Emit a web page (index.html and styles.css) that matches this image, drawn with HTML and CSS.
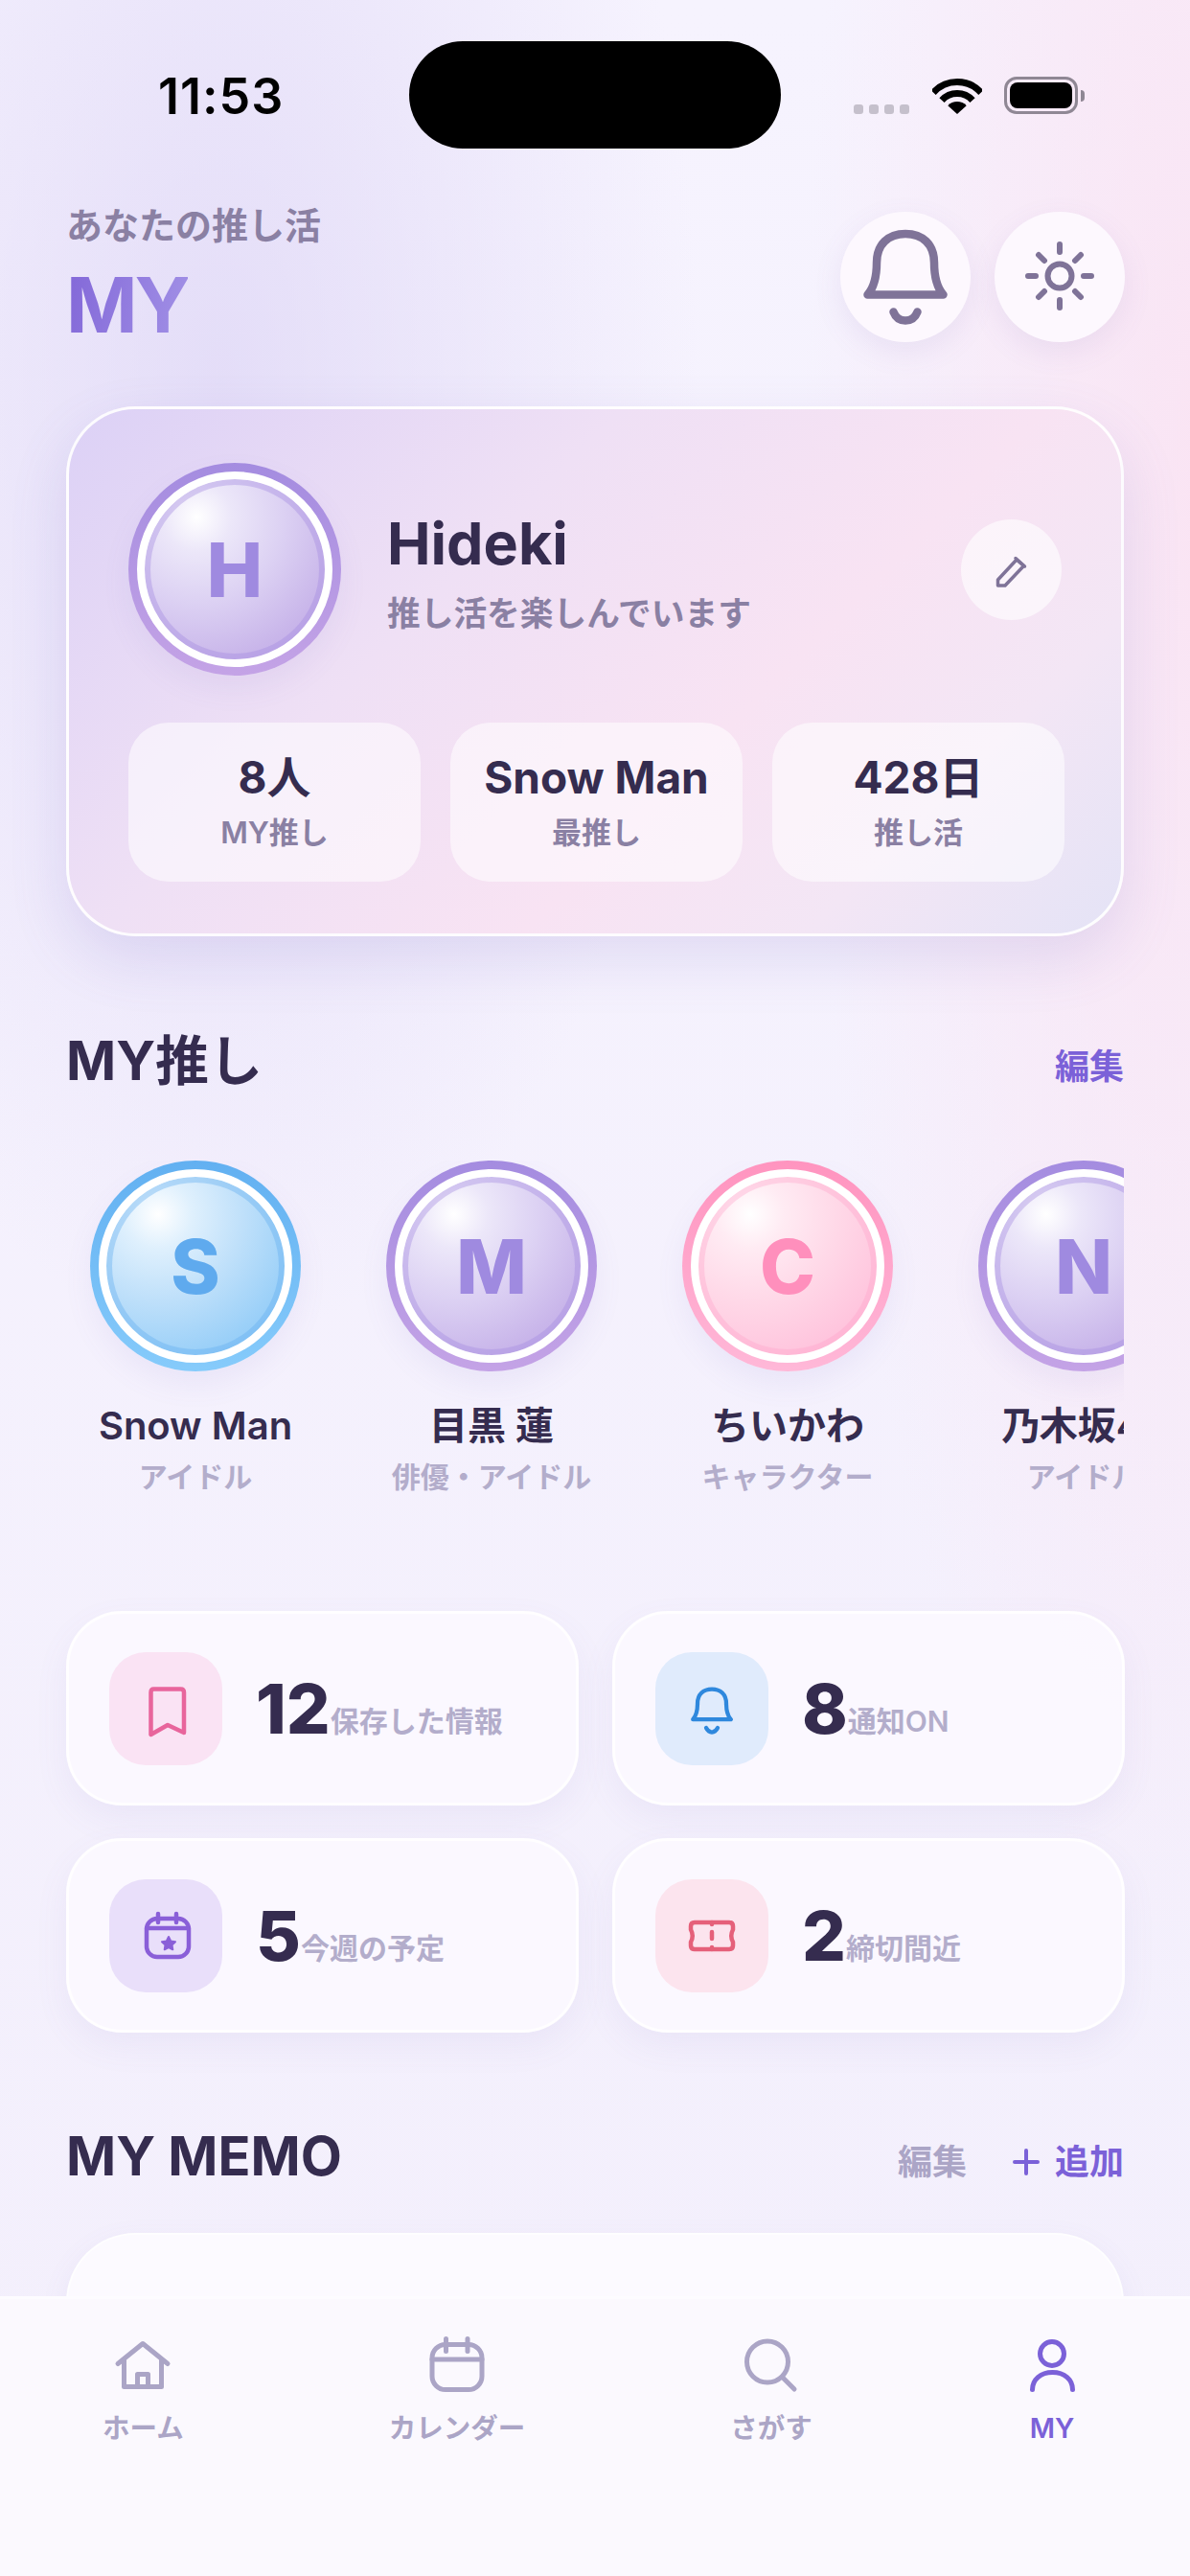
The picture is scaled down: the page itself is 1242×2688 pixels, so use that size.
FILE: index.html
```html
<!DOCTYPE html>
<html lang="ja">
<head>
    <meta charset="UTF-8">
    <meta name="viewport" content="width=device-width, initial-scale=1.0">
    <title>MY</title>
    <link rel="stylesheet" href="styles.css">
</head>
<body>
<div class="page">
    <div class="status">
        <div class="time">11:53</div>
        <div class="island"></div>
        <div class="status-icons">
            <div class="signal"><i></i><i></i><i></i><i></i></div>
            <svg class="wifi" width="52" height="38" viewBox="0 0 52 38" fill="none" stroke="#000">
                <path d="M1.1 15.6A33.5 33.5 0 0 1 50.9 15.6" stroke-width="7"/>
                <path d="M10 23.6A21.5 21.5 0 0 1 42 23.6" stroke-width="7"/>
                <path d="M26 38L16.3 29.3A13 13 0 0 1 35.7 29.3Z" fill="#000" stroke="none"/>
            </svg>
            <div class="battery"><div class="battery-fill"></div></div>
            <div class="battery-cap"></div>
        </div>
    </div>

    <header class="header">
        <div>
            <div class="header-sub">あなたの推し活</div>
            <div class="header-title">MY</div>
        </div>
        <div class="header-btns">
            <div class="round-btn">
                <svg width="136" height="136" viewBox="0 0 136 136" fill="none" stroke="#7f7398" stroke-width="8.5" stroke-linecap="round" stroke-linejoin="round">
                    <path d="M28.5 86.5C36 78 38 66 38 53C38 34 50 23 68 23C86 23 98 34 98 53C98 66 100 78 107.5 86.5Z"/>
                    <path d="M55.5 104.5C58 111 63 113.5 68 113.5C73 113.5 78 111 80.5 104.5"/>
                </svg>
            </div>
            <div class="round-btn">
                <svg width="136" height="136" viewBox="0 0 136 136" fill="none" stroke="#7f7398" stroke-width="6" stroke-linecap="round">
                    <circle cx="68" cy="67" r="12.500"/>
                    <path d="M68 34V42M68 92V100M35 67H43M93 67H101M46 45L52 51M84 83L90 89M46 89L52 83M84 51L90 45"/>
                </svg>
            </div>
        </div>
    </header>

    <section class="profile">
        <div class="profile-top">
            <div class="avatar purple big"><div class="ball">H</div></div>
            <div class="profile-info">
                <div class="profile-name">Hideki</div>
                <div class="profile-text">推し活を楽しんでいます</div>
            </div>
            <div class="edit-btn">
                <svg width="105" height="105" viewBox="0 0 105 105" fill="none" stroke="#7f7398" stroke-width="3.500" stroke-linejoin="round">
                    <path d="M38.500 69V63L58 42L65.500 48.500L46 69Z"/>
                    <path d="M57 40.500L66.500 49" stroke-linecap="round"/>
                </svg>
            </div>
        </div>
        <div class="profile-stats">
            <div class="pstat"><div class="pstat-value">8人</div><div class="pstat-label">MY推し</div></div>
            <div class="pstat"><div class="pstat-value">Snow Man</div><div class="pstat-label">最推し</div></div>
            <div class="pstat"><div class="pstat-value">428日</div><div class="pstat-label">推し活</div></div>
        </div>
    </section>

    <div class="section-head oshi-head">
        <h2>MY推し</h2>
        <div class="section-link">編集</div>
    </div>

    <div class="oshi-row">
        <div class="oshi">
            <div class="avatar blue"><div class="ball">S</div></div>
            <div class="oshi-name">Snow Man</div>
            <div class="oshi-type">アイドル</div>
        </div>
        <div class="oshi">
            <div class="avatar purple"><div class="ball">M</div></div>
            <div class="oshi-name">目黒 蓮</div>
            <div class="oshi-type">俳優・アイドル</div>
        </div>
        <div class="oshi">
            <div class="avatar pink"><div class="ball">C</div></div>
            <div class="oshi-name">ちいかわ</div>
            <div class="oshi-type">キャラクター</div>
        </div>
        <div class="oshi">
            <div class="avatar purple"><div class="ball">N</div></div>
            <div class="oshi-name">乃木坂46</div>
            <div class="oshi-type">アイドル</div>
        </div>
    </div>

    <div class="stat-grid">
        <div class="stat-card">
            <div class="stat-icon bg-pink">
                <svg width="118" height="118" viewBox="0 0 118 118" fill="none" stroke="#e8659c" stroke-width="4.500" stroke-linecap="round" stroke-linejoin="round">
                    <path d="M46.500 38.500H74.500Q78 38.500 78 42V84L61 76L43.500 86V42Q43.500 38.500 46.500 38.500Z"/>
                </svg>
            </div>
            <div class="stat-num">12</div>
            <div class="stat-label">保存した情報</div>
        </div>
        <div class="stat-card">
            <div class="stat-icon bg-blue">
                <svg width="118" height="118" viewBox="0 0 118 118" fill="none" stroke="#2f88dd" stroke-width="4.250" stroke-linecap="round" stroke-linejoin="round">
                    <path d="M39.200 70.200C43 66 44 60 44 53.500C44 44 50 38.500 59 38.500C68 38.500 74 44 74 53.500C74 60 75 66 78.800 70.200Z"/>
                    <path d="M53 79C54.500 82 56.500 83.500 59 83.500C61.500 83.500 63.500 82 65 79"/>
                </svg>
            </div>
            <div class="stat-num">8</div>
            <div class="stat-label">通知ON</div>
        </div>
        <div class="stat-card">
            <div class="stat-icon bg-purple">
                <svg width="118" height="118" viewBox="0 0 118 118" fill="none" stroke="#8a5fd8" stroke-width="4.500" stroke-linecap="round" stroke-linejoin="round">
                    <rect x="39" y="41" width="44" height="40" rx="11"/>
                    <path d="M39 51H83M51 36V45M70 36V45"/>
                    <path d="M62 60L64.200 64.500L69 65.200L65.500 68.500L66.300 73.300L62 71L57.700 73.300L58.500 68.500L55 65.200L59.800 64.500Z" fill="#8a5fd8" stroke-width="2"/>
                </svg>
            </div>
            <div class="stat-num">5</div>
            <div class="stat-label">今週の予定</div>
        </div>
        <div class="stat-card">
            <div class="stat-icon bg-red">
                <svg width="118" height="118" viewBox="0 0 118 118" fill="none" stroke="#e5607a" stroke-width="4.500" stroke-linecap="round" stroke-linejoin="round">
                    <path d="M41 45H77Q81 45 81 49V52.500Q77.500 59 81 65.500V69Q81 73 77 73H41Q37 73 37 69V65.500Q40.500 59 37 52.500V49Q37 45 41 45Z"/>
                    <path d="M59 45V47M59 55V62M59 71V73"/>
                </svg>
            </div>
            <div class="stat-num">2</div>
            <div class="stat-label">締切間近</div>
        </div>
    </div>

    <div class="section-head memo-head">
        <h2>MY MEMO</h2>
        <div class="memo-actions">
            <div class="section-link muted">編集</div>
            <div class="section-link add">
                <svg width="28" height="28" viewBox="0 0 28 28" stroke="#7b61d8" stroke-width="4" stroke-linecap="round"><path d="M14 2V26M2 14H26"/></svg>
                追加
            </div>
        </div>
    </div>

    <div class="memo-card"></div>

    <nav class="tabbar">
        <div class="tab">
            <svg width="72" height="72" viewBox="0 0 72 72" fill="none" stroke="#aba5c6" stroke-width="5" stroke-linecap="round" stroke-linejoin="round">
                <path d="M10 28.500L36 7.500L62 28.500"/>
                <path d="M16.500 24V52.500H55.500V24"/>
                <path d="M30.500 52.500V39.500H41.500V52.500"/>
            </svg>
            <div class="tab-label">ホーム</div>
        </div>
        <div class="tab">
            <svg width="72" height="72" viewBox="0 0 72 72" fill="none" stroke="#aba5c6" stroke-width="5" stroke-linecap="round" stroke-linejoin="round">
                <rect x="10" y="8.500" width="52" height="47" rx="14"/>
                <path d="M10 24H62M24.500 2.500V15.500M47 2.500V15.500"/>
            </svg>
            <div class="tab-label">カレンダー</div>
        </div>
        <div class="tab">
            <svg width="72" height="72" viewBox="0 0 72 72" fill="none" stroke="#aba5c6" stroke-width="5" stroke-linecap="round">
                <circle cx="32" cy="26.500" r="21.500"/>
                <path d="M48 43L60 55"/>
            </svg>
            <div class="tab-label">さがす</div>
        </div>
        <div class="tab active">
            <svg width="72" height="72" viewBox="0 0 72 72" fill="none" stroke="#7b61d8" stroke-width="5" stroke-linecap="round">
                <circle cx="36" cy="18" r="12.500"/>
                <path d="M15.500 55.500C15.500 45 24 37.500 36.500 37.500C49 37.500 57.500 45 57.500 55.500"/>
            </svg>
            <div class="tab-label">MY</div>
        </div>
    </nav>
</div>
</body>
</html>
```

FILE: styles.css
```css
* {
    box-sizing: border-box;
}

body {
    margin: 0;
    font-family: Inter, "Noto Sans CJK JP", sans-serif;
    color: #352c4f;
}

.page {
    position: relative;
    width: 1242px;
    height: 2688px;
    overflow: hidden;
    padding: 0 69px;
    background:
        radial-gradient(ellipse 500px 1000px at 230px 400px, rgba(222, 214, 246, 0.75), rgba(222, 214, 246, 0)),
        radial-gradient(ellipse 420px 1600px at 1260px 500px, rgba(250, 226, 242, 0.9), rgba(250, 226, 242, 0)),
        linear-gradient(180deg, #f6f3fe 0%, #f3effc 100%);
}

/* status bar */
.status {
    display: grid;
    grid-template-columns: 358px 388px 1fr;
    height: 155px;
    padding-top: 43px;
}

.time {
    padding: 31px 0 0 96px;
    font-size: 52px;
    line-height: 54px;
    font-weight: 600;
    letter-spacing: 1px;
    color: #000;
}

.island {
    width: 388px;
    height: 112px;
    border-radius: 56px;
    background: #000;
}

.status-icons {
    display: flex;
    align-items: flex-start;
    padding: 37px 0 0 76px;
}

.signal {
    display: flex;
    gap: 6px;
    margin-top: 29px;
}

.signal i {
    width: 10px;
    height: 10px;
    border-radius: 3px;
    background: #c5c0cc;
}

.wifi {
    margin-left: 24px;
    margin-top: 1px;
}

.battery {
    width: 77px;
    height: 39px;
    margin-left: 23px;
    padding: 3px;
    border: 3px solid #8f8794;
    border-radius: 13px;
}

.battery-fill {
    width: 100%;
    height: 100%;
    border-radius: 8px;
    background: #000;
}

.battery-cap {
    width: 4px;
    height: 12px;
    margin: 14px 0 0 3px;
    border-radius: 0 4px 4px 0;
    background: #8f8794;
}

/* header */
.header {
    display: flex;
    justify-content: space-between;
    height: 136px;
    margin-top: 66px;
}

.header-sub {
    font-size: 38px;
    line-height: 50px;
    margin-top: -11px;
    font-weight: 600;
    color: #8a80a3;
}

.header-title {
    margin-top: 10px;
    font-size: 80px;
    line-height: 96px;
    font-weight: 700;
    letter-spacing: -3px;
    background: linear-gradient(100deg, #8267d8, #a291e6);
    -webkit-background-clip: text;
    background-clip: text;
    color: transparent;
    width: fit-content;
}

.header-btns {
    display: flex;
    gap: 25px;
    margin-right: -1px;
}

.round-btn {
    width: 136px;
    height: 136px;
    border-radius: 50%;
    background: #fdf8fe;
    box-shadow: 0 10px 30px rgba(120, 100, 180, 0.1);
}

.round-btn svg,
.edit-btn svg,
.stat-icon svg {
    display: block;
}

/* profile card */
.profile {
    height: 553px;
    margin-top: 67px;
    padding: 56px 62px 0;
    border: 3px solid rgba(255, 255, 255, 0.9);
    border-radius: 72px;
    background: linear-gradient(135deg, #dcd1f6 0%, #efe0f5 35%, #f8e3f3 62%, #f3e6f5 80%, #e4e3f6 100%);
    box-shadow: 0 24px 60px rgba(120, 100, 190, 0.16);
}

.profile-top {
    display: flex;
    align-items: center;
}

.profile-info {
    flex: 1;
    margin-left: 48px;
    padding-top: 8px;
}

.profile-name {
    font-size: 61px;
    line-height: 70px;
    font-weight: 700;
}

.profile-text {
    margin-top: 14px;
    font-size: 34.700px;
    line-height: 48px;
    font-weight: 600;
    color: #8a80a3;
}

.edit-btn {
    width: 105px;
    height: 105px;
    border-radius: 50%;
    background: rgba(255, 255, 255, 0.6);
}

.profile-stats {
    display: grid;
    grid-template-columns: repeat(3, 305px);
    gap: 31px;
    margin-top: 49px;
}

.pstat {
    height: 166px;
    padding-top: 29px;
    border-radius: 42px;
    text-align: center;
    background: rgba(255, 255, 255, 0.55);
}

.pstat-value {
    font-size: 46px;
    line-height: 56px;
    font-weight: 700;
}

.pstat-label {
    margin-top: 10px;
    font-size: 31px;
    line-height: 40px;
    font-weight: 600;
    color: #8a80a3;
}

/* avatars */
.avatar {
    flex: none;
    width: 220px;
    height: 220px;
    padding: 9px;
    border-radius: 50%;
    box-shadow: 0 14px 30px rgba(120, 100, 190, 0.08);
}

.avatar.big {
    width: 222px;
    height: 222px;
}

.avatar.purple {
    background: linear-gradient(180deg, #a48ce0, #c4a3e6);
    color: #9f8ae0;
}

.avatar.blue {
    background: linear-gradient(180deg, #62b0f1, #86cbfb);
    color: #5faaee;
}

.avatar.pink {
    background: linear-gradient(180deg, #ff94bf, #ffb8d8);
    color: #ff8fbc;
}

.ball {
    display: flex;
    align-items: center;
    justify-content: center;
    width: 100%;
    height: 100%;
    border: 8px solid #fff;
    border-radius: 50%;
    font-size: 78px;
    font-weight: 800;
}

.purple .ball {
    background: radial-gradient(circle at 29% 21%, #fff 0%, #ece7f9 18%, #dcd1f3 45%, #c9b6ea 75%, #bda6e6 100%);
    box-shadow: inset 0 0 0 6px rgba(165, 140, 225, 0.4);
}

.blue .ball {
    background: radial-gradient(circle at 29% 21%, #fff 0%, #dff0fd 18%, #bfe0fa 45%, #9bd0f8 75%, #85c4f6 100%);
    box-shadow: inset 0 0 0 6px rgba(100, 175, 240, 0.4);
}

.pink .ball {
    background: radial-gradient(circle at 29% 21%, #fff 0%, #ffebf3 18%, #ffd9e8 45%, #ffc6de 75%, #ffb6d4 100%);
    box-shadow: inset 0 0 0 6px rgba(255, 160, 200, 0.35);
}

/* section heads */
.section-head {
    display: flex;
    justify-content: space-between;
    align-items: center;
}

.section-head h2 {
    margin: 0;
    font-size: 56px;
    line-height: 68px;
    font-weight: 700;
}

.section-link {
    margin-top: 12px;
    font-size: 36px;
    line-height: 48px;
    font-weight: 600;
    color: #7b61d8;
}

.section-link.muted {
    color: #aba5c6;
}

.section-link.add {
    display: flex;
    align-items: center;
    gap: 16px;
}

.oshi-head {
    margin-top: 96px;
}

.memo-head {
    margin-top: 95px;
}

.memo-actions {
    display: flex;
    gap: 48px;
}

/* oshi list */
.oshi-row {
    display: flex;
    gap: 39px;
    margin-top: 70px;
    overflow: hidden;
    padding-bottom: 40px;
    margin-bottom: -40px;
}

.oshi {
    flex: none;
    display: flex;
    flex-direction: column;
    align-items: center;
    width: 270px;
}

.oshi-name {
    margin-top: 31px;
    font-size: 40px;
    line-height: 52px;
    font-weight: 600;
    white-space: nowrap;
}

.oshi-type {
    margin-top: 2px;
    font-size: 30px;
    line-height: 50px;
    font-weight: 600;
    white-space: nowrap;
    color: #b3adcb;
}

/* stat cards */
.stat-grid {
    display: grid;
    grid-template-columns: repeat(2, 535px);
    gap: 34px 35px;
    margin-top: 115px;
}

.stat-card {
    display: flex;
    align-items: center;
    height: 203px;
    padding-left: 42px;
    border: 3px solid rgba(255, 255, 255, 0.85);
    border-radius: 58px;
    background: rgba(251, 248, 255, 0.95);
    box-shadow: 0 14px 36px rgba(120, 100, 190, 0.07);
}

.stat-icon {
    flex: none;
    width: 118px;
    height: 118px;
    margin-right: 35px;
    border-radius: 38px;
}

.bg-pink { background: #fae3f4; }
.bg-blue { background: #e0ebfc; }
.bg-purple { background: #e9dffa; }
.bg-red { background: #fce4ee; }

.stat-num {
    font-size: 72px;
    line-height: 80px;
    font-weight: 800;
}

.stat-label {
    align-self: center;
    margin-top: 26px;
    font-size: 30px;
    line-height: 40px;
    font-weight: 600;
    color: #b3adcb;
}

/* memo */
.memo-card {
    height: 300px;
    margin-top: 46px;
    border: 2px solid rgba(255, 255, 255, 0.7);
    border-radius: 72px;
    background: #fcfaff;
    box-shadow: 0 10px 30px rgba(120, 100, 190, 0.08);
}

/* tab bar */
.tabbar {
    position: absolute;
    left: 0;
    right: 0;
    bottom: 0;
    height: 292px;
    display: flex;
    justify-content: space-between;
    padding: 39px 108px 0 107px;
    border-top: 3px solid #fdfcff;
    background: #fbf9fe;
}

.tab {
    display: flex;
    flex-direction: column;
    align-items: center;
    color: #aba5c6;
}

.tab svg {
    display: block;
}

.tab.active {
    color: #7b61d8;
}

.tab-label {
    margin-top: 4px;
    font-size: 28.500px;
    line-height: 40px;
    font-weight: 600;
    white-space: nowrap;
}
```
